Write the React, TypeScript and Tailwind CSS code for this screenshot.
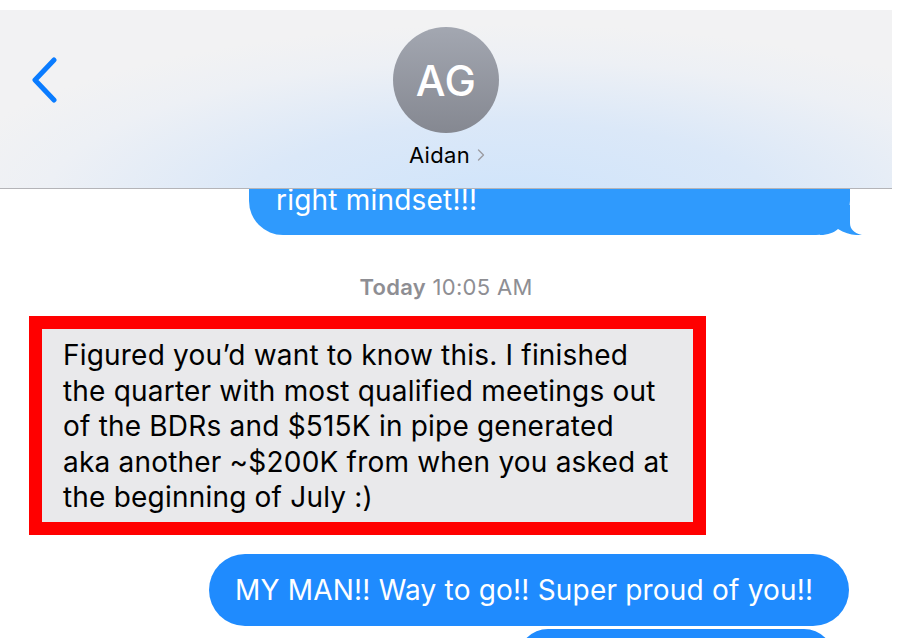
import { ChevronRight } from "lucide-react";

export default function App() {
  return (
    <div className="w-[900px] h-[638px] overflow-hidden bg-white font-['Inter','Liberation_Sans',sans-serif] antialiased">
      {/* Nav header */}
      <div className="pt-[10px] pr-[8px] relative z-10">
        <div className="h-[179px] border-b border-[#b4b4b8] bg-[radial-gradient(ellipse_65%_100%_at_57%_108%,#cfe4fb_0%,#dbe8f8_45%,#edf0f5_80%,#f2f2f3_100%)] flex items-start">
          <div className="w-[88px] pt-[47px] pl-[30px]">
            <svg width="28" height="46" viewBox="0 0 28 46" fill="none">
              <path d="M24 3 L5 23 L24 43" stroke="#0a7cff" strokeWidth="5" strokeLinecap="round" strokeLinejoin="round" />
            </svg>
          </div>
          <div className="flex-1 flex flex-col items-center pt-[17px] pr-[88px]">
            <div className="w-[106px] h-[106px] rounded-full bg-gradient-to-b from-[#a3a7b1] to-[#858891] flex items-center justify-center">
              <span className="text-white text-[42px] font-medium tracking-[0.5px]">AG</span>
            </div>
            <div className="mt-[9px] pl-[8px] flex items-center text-[22px] tracking-[0.3px] text-black leading-[26px]">
              Aidan
              <ChevronRight className="w-[20px] h-[22px] text-[#9b9ba0] ml-[1px]" strokeWidth={1.6} />
            </div>
          </div>
        </div>
      </div>

      {/* Messages */}
      <div className="flex flex-col">
        {/* partially hidden sent bubble */}
        <div className="flex justify-end pr-[50px] mt-[-40px]">
          <div className="relative w-[601px] bg-[#2f9afd] rounded-[34px] pl-[27px] pt-[33px] pb-[17px] text-white text-[28px] tracking-[0.2px] leading-[36px]">
            right mindset!!!
            <svg className="absolute right-[-12px] bottom-0" width="42" height="30" viewBox="0 0 42 30">
              <path d="M0 0 H30 V18 C30 24 34 28 42 30 C35 30.6 26 29 18 24 C14 27.5 8 30 0 30 Z" fill="#2f9afd" />
            </svg>
          </div>
        </div>

        <div className="mt-[39px] text-center text-[22px] tracking-[0.3px] leading-[26px] text-[#8e8e93] pr-[8px]">
          <span className="font-semibold">Today</span> 10:05 AM
        </div>

        {/* highlighted received message */}
        <div className="mt-[16px] ml-[29px] w-[677px] border-[13px] border-[#ff0000]">
          <div className="bg-[#e9e9eb] pl-[21px] pt-[9px] pb-[6px] text-[28px] tracking-[0.2px] leading-[35.5px] text-black whitespace-nowrap">
            Figured you’d want to know this. I finished<br />
            the quarter with most qualified meetings out<br />
            of the BDRs and $515K in pipe generated<br />
            aka another ~$200K from when you asked at<br />
            the beginning of July :)
          </div>
        </div>

        <div className="mt-[19px] flex justify-end pr-[51px]">
          <div className="w-[640px] h-[72px] bg-[#1f8bfe] rounded-[36px] pl-[26px] flex items-center text-white text-[28px] tracking-[0.2px]">
            MY MAN!! Way to go!! Super proud of you!!
          </div>
        </div>

        <div className="mt-[3px] flex justify-end pr-[66px]">
          <div className="w-[316px] h-[60px] bg-[#1f8bfe] rounded-[36px]" />
        </div>
      </div>
    </div>
  );
}
